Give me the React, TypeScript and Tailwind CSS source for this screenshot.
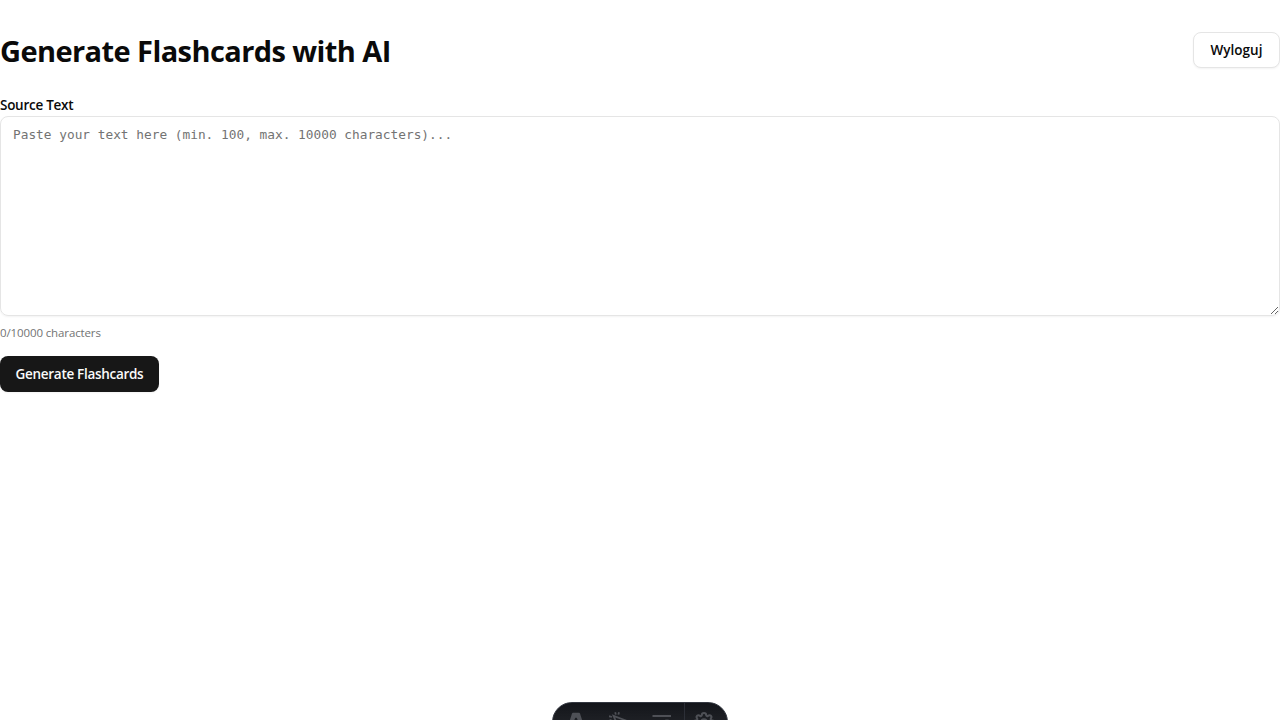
import { useState } from "react";

const MAX = 10000;

function Toolbar() {
  return (
    <div className="fixed -bottom-[22px] left-1/2 flex h-10 w-44 -translate-x-1/2 overflow-hidden rounded-full border border-[#343841] bg-linear-to-b from-[#13151a] to-[#13151a]/90 text-[#4e5056]">
      <div className="flex w-[46px] items-center justify-center">
        <svg className="h-5 w-5" viewBox="0 0 20 20" fill="currentColor">
          <path d="M6 1.500c.2-.6.5-.8 1-.8h6c.5 0 .8.200 1 .8L18 14c-1.500-.8-3-1.200-4.400-1.400L10.800 6c-.2-.5-1.400-.5-1.600 0l-2.800 6.600c-1.500.2-3 .6-4.400 1.400z" />
        </svg>
      </div>
      <div className="flex w-10 items-center justify-center">
        <svg className="h-5 w-5" viewBox="0 0 20 20" fill="none" stroke="currentColor" strokeWidth="1.800">
          <path d="M6.200.2l.6 2.400M10 .2l-.6 2.400M0 4.200l3 .8M.5 8.500l2-.7M4.500 3.800l13 4.900-5.400 2.200-2.200 5.300z" />
        </svg>
      </div>
      <div className="flex w-[45px] items-center justify-center">
        <svg className="h-5 w-5" viewBox="0 0 20 20" fill="none" stroke="currentColor" strokeWidth="1.800">
          <path d="M.5 4h18.500M1 10h8M1 16h6" />
          <circle cx="15" cy="12.500" r="4" />
        </svg>
      </div>
      <div className="flex w-[43px] items-center justify-center border-l border-[#343841]/70 pr-[5px]">
        <svg className="h-5 w-5" viewBox="1 1 18 18" fill="none" stroke="currentColor" strokeWidth="1.800" strokeLinejoin="round">
          <path d="M8 4C8 1.200 12 1.200 12 4c.3.7.8.9 1.500.6 2-1.800 4.200.4 2.600 2.400-.3.8 0 1.100.7 1.400 2.400 0 2.400 3.200 0 3.200-.7.3-1 .8-.7 1.500 1.600 2-.6 4.200-2.600 2.600-.7-.3-1.200 0-1.500.6 0 2.400-4 2.400-4 0-.3-.6-.8-.9-1.500-.6-2 1.600-4.200-.6-2.600-2.600.3-.7 0-1.200-.7-1.500-2.400 0-2.400-3.200 0-3.200.7-.3 1-.6.7-1.400C2.300 5 4.500 2.800 6.500 4.600 7.200 4.900 7.700 4.700 8 4z" />
          <circle cx="10" cy="10" r="2.500" />
        </svg>
      </div>
    </div>
  );
}

export default function App() {
  const [text, setText] = useState("");

  return (
    <div className="min-h-screen bg-white font-['Open_Sans',sans-serif] text-neutral-950">
      <main className="flex flex-col pt-8">
        <header className="flex h-9 items-center justify-between">
          <h1 className="pt-0.5 text-[29px] leading-9 font-bold tracking-[-0.580px] whitespace-nowrap">Generate Flashcards with AI</h1>
          <button className="h-9 w-[87px] rounded-lg border border-neutral-200 bg-white text-[13.500px] font-semibold shadow-xs">
            Wyloguj
          </button>
        </header>
        <div className="mt-[27px] flex flex-col">
          <label htmlFor="source" className="h-[21px] text-[13.500px] leading-5 font-semibold tracking-[-0.270px]">
            Source Text
          </label>
          <textarea
            id="source"
            value={text}
            maxLength={MAX}
            onChange={(e) => setText(e.target.value)}
            placeholder="Paste your text here (min. 100, max. 10000 characters)..."
            className="h-[200px] w-full rounded-lg border border-neutral-200 bg-transparent px-3 py-2 font-['DejaVu_Sans_Mono',monospace] text-[12.800px] leading-5 shadow-xs placeholder:text-[#737373]"
          />
          <p className="mt-[9px] text-[11.500px] leading-4 tracking-[-0.120px] text-[#737373]">
            {text.length}/{MAX} characters
          </p>
        </div>
        <button className="mt-[15px] h-9 w-[159px] rounded-lg bg-neutral-900 text-[13.500px] font-semibold tracking-[-0.300px] text-neutral-50 shadow-xs">
          Generate Flashcards
        </button>
      </main>
      <Toolbar />
    </div>
  );
}
